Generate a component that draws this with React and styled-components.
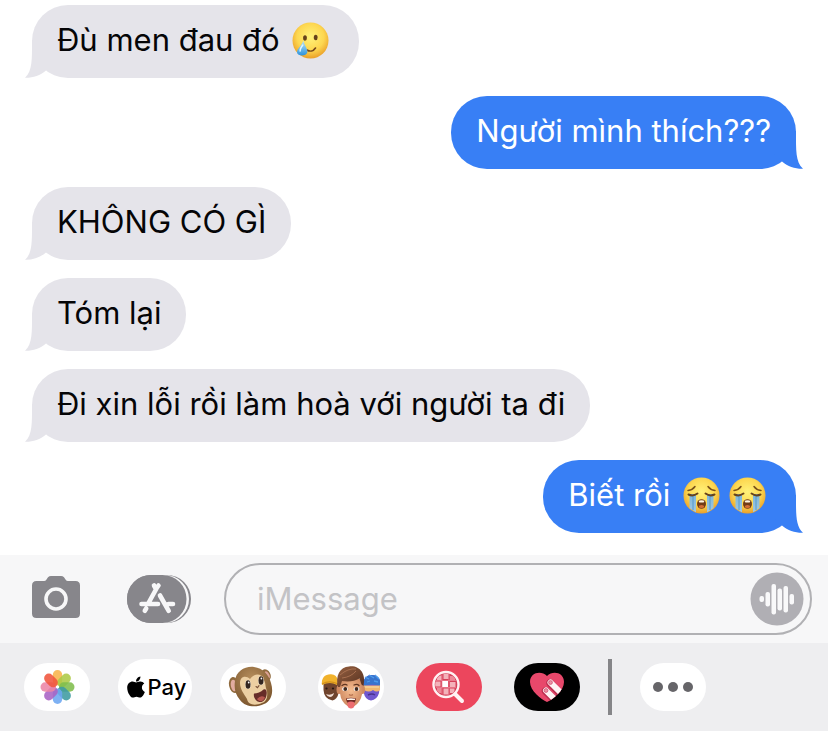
import React from "react";
import styled, { createGlobalStyle } from "styled-components";
import { FaApple } from "react-icons/fa";

const GlobalStyle = createGlobalStyle`
  * {
    box-sizing: border-box;
  }
  body {
    margin: 0;
    background: #ffffff;
    font-family: Inter, "Liberation Sans", sans-serif;
  }
  button {
    padding: 0;
    border: 0;
    background: none;
    font: inherit;
    cursor: pointer;
  }
  svg {
    display: block;
  }
`;

const Page = styled.div`
  display: flex;
  flex-direction: column;
  min-height: 100vh;
`;

const Thread = styled.main`
  flex: 1;
  display: flex;
  flex-direction: column;
  gap: 18px;
  padding: 5px 32px 22px;
`;

const Bubble = styled.p`
  position: relative;
  align-self: ${({ $sent }) => ($sent ? "flex-end" : "flex-start")};
  margin: 0;
  padding: 15px 25px 19px;
  border-radius: 36px;
  font-size: 31px;
  line-height: 39px;
  color: ${({ $sent }) => ($sent ? "#ffffff" : "#050507")};
  background: ${({ $sent }) => ($sent ? "#387ff5" : "#e5e4ea")};
`;

const Tail = styled.svg`
  position: absolute;
  bottom: 0;
  ${({ $sent }) => ($sent ? "right: -7px; transform: scaleX(-1);" : "left: -7px;")}
  fill: ${({ $sent }) => ($sent ? "#387ff5" : "#e5e4ea")};
`;

const EmojiSvg = styled.svg`
  display: inline-block;
  width: 37px;
  height: 37px;
  margin: 0 5px 0 4px;
  vertical-align: -8px;
`;

const Compose = styled.form`
  display: flex;
  align-items: center;
  padding: 8px 16px;
  padding-left: 32px;
  background: #f7f7f8;
`;

const IconButton = styled.button`
  margin-right: ${({ $space }) => $space}px;
`;

const Field = styled.div`
  flex: 1;
  min-width: 0;
  display: flex;
  align-items: center;
  height: 72px;
  padding: 0 6px 0 31px;
  border: 2px solid #b1b1b4;
  border-radius: 36px;
`;

const MessageInput = styled.input`
  flex: 1;
  min-width: 0;
  padding: 0;
  border: 0;
  outline: 0;
  background: none;
  font: inherit;
  font-size: 31px;
  line-height: 40px;
  &::placeholder {
    color: #c3c3c6;
    opacity: 1;
  }
`;

const AppStrip = styled.nav`
  display: flex;
  align-items: center;
  gap: 24px;
  height: 88px;
  padding: 0 20px;
  background: #eeeef0;
`;

const AppSlot = styled.div`
  display: flex;
  justify-content: center;
  flex: 0 0 74px;
`;

const AppButton = styled.button`
  display: flex;
  align-items: center;
  justify-content: center;
  width: ${({ $large }) => ($large ? 74 : 66)}px;
  height: ${({ $large }) => ($large ? 56 : 48)}px;
  border-radius: 28px;
  background: ${({ $bg }) => $bg || "#ffffff"};
`;

const PayLabel = styled.span`
  font-size: 22px;
  font-weight: 500;
  line-height: 28px;
  color: #000000;
`;

const Divider = styled.div`
  width: 4px;
  height: 56px;
  background: #858588;
`;

const FaceGradient = ({ id }) => (
  <radialGradient id={id} cx="0.5" cy="0.4" r="0.62">
    <stop offset="0" stopColor="#fff27a" />
    <stop offset="0.6" stopColor="#fdd750" />
    <stop offset="1" stopColor="#e99b25" />
  </radialGradient>
);

const TearSmile = () => (
  <EmojiSvg viewBox="0 0 37 37" role="img" aria-label="🥲">
    <defs>
      <FaceGradient id="smile-face" />
      <linearGradient id="smile-tear" x1="0" y1="0" x2="0" y2="1">
        <stop offset="0" stopColor="#b9e6fa" />
        <stop offset="1" stopColor="#2f94dd" />
      </linearGradient>
    </defs>
    <circle cx="18.5" cy="18.5" r="18" fill="url(#smile-face)" />
    <ellipse cx="13" cy="16" rx="1.9" ry="2.8" fill="#66421b" />
    <ellipse cx="23.7" cy="15.5" rx="1.9" ry="2.8" fill="#66421b" />
    <path d="M15 28c3 2 6.500 1 8.500-2" fill="none" stroke="#76471c" strokeWidth="1.600" strokeLinecap="round" />
    <path d="M11.300 18.500c-1.200 5-6.600 8.500-6.300 12 .3 3.700 9.300 4 10.300 0 .8-3.600-3-7-4-12z" fill="url(#smile-tear)" />
    <path d="M10.800 23c-1.500 2-3 4-2.600 6" fill="none" stroke="#def5ff" strokeWidth="1.500" strokeLinecap="round" />
  </EmojiSvg>
);

const Crying = ({ id }) => (
  <EmojiSvg viewBox="0 0 37 37" role="img" aria-label="😭">
    <defs>
      <FaceGradient id={id} />
      <linearGradient id={`${id}-tears`} x1="0" y1="0" x2="0" y2="1">
        <stop offset="0" stopColor="#79b4dc" />
        <stop offset="1" stopColor="#a2cae2" />
      </linearGradient>
    </defs>
    <circle cx="18.5" cy="18.5" r="18" fill={`url(#${id})`} />
    <path d="M6.500 17h6.500v18.200Q9.500 33.500 6.500 31zM24 17h6.500v14q-3 2.600-6.500 4.200z" fill={`url(#${id}-tears)`} />
    <path d="M10 19v14M27 19v14" stroke="#5798c8" strokeWidth="1" />
    <path d="M5 13.500q4.500-.5 7-4M32 13.500q-4.500-.5-7-4" fill="none" stroke="#795019" strokeWidth="1.500" strokeLinecap="round" />
    <path d="M5.500 17.500q4.500 2.200 9-1M31.500 17.500q-4.500 2.200-9-1" fill="none" stroke="#68431b" strokeWidth="2" strokeLinecap="round" />
    <ellipse cx="18.5" cy="27" rx="4.5" ry="4.8" fill="#713c16" />
    <ellipse cx="18.5" cy="24.400" rx="2.8" ry="1.200" fill="#fff5df" />
    <ellipse cx="18.5" cy="29.500" rx="2.7" ry="1.500" fill="#d46e36" />
  </EmojiSvg>
);

const CameraIcon = () => (
  <svg width="48" height="48" viewBox="0 0 48 48">
    <path
      d="M4.500 6h7.500q1.500 0 2.500-1.500L16 2.300Q17.200 1 19 1h10q1.800 0 3 1.300l1.500 2.200Q34.500 6 36 6h7.500Q48 6 48 10.500v28q0 4.500-4.500 4.500h-39Q0 43 0 38.500v-28Q0 6 4.500 6z"
      fill="#87868b"
    />
    <circle cx="24" cy="24" r="10" fill="none" stroke="#f7f7f8" strokeWidth="3.600" />
  </svg>
);

const AppStoreIcon = () => (
  <svg width="64" height="48" viewBox="0 0 64 48">
    <rect width="64" height="48" rx="24" fill="#87868b" />
    <rect x="10" width="52" height="48" rx="24" fill="#f7f7f8" />
    <rect width="59.500" height="48" rx="24" fill="#87868b" />
    <g fill="none" stroke="#f7f7f8" strokeWidth="4.600" strokeLinecap="round" strokeLinejoin="round">
      <path d="M27 10.500l2 3.500 2.500-3.500M29.500 13.500L21.500 28M19.200 33.500l-1.400 2.300M14.500 29H31M41.500 29h4.500M33 20.500l8.700 15.300" />
    </g>
  </svg>
);

const AudioIcon = () => (
  <svg width="54" height="54" viewBox="0 0 54 54">
    <circle cx="27" cy="27" r="26.500" fill="#b0afb4" />
    <g fill="#f9f9fa">
      <rect x="9.500" y="24" width="4.500" height="6" rx="2" />
      <rect x="15.500" y="20" width="4.500" height="14.500" rx="2" />
      <rect x="21.500" y="12" width="4.500" height="30.500" rx="2" />
      <rect x="27.500" y="16.500" width="4.500" height="22" rx="2" />
      <rect x="33.500" y="14" width="4.500" height="26.500" rx="2" />
      <rect x="39.500" y="22" width="4.500" height="10.500" rx="2" />
    </g>
  </svg>
);

const PETALS = ["#f8b44b", "#adc945", "#7fbd4c", "#3d9ba0", "#6ca6f1", "#a962c4", "#ec85a6", "#f0543c"];

const PhotosIcon = () => (
  <svg width="36" height="36" viewBox="-18.500 -18 36 36">
    {PETALS.map((color, i) => (
      <rect
        key={color}
        x="-4.700"
        y="-17"
        width="9.400"
        height="15.500"
        rx="4.700"
        fill={color}
        fillOpacity="0.88"
        transform={`rotate(${i * 45})`}
      />
    ))}
    <circle r="1.300" fill="#ffffff" />
  </svg>
);

const MonkeyIcon = () => (
  <svg width="66" height="48" viewBox="0 0 66 48">
    <defs>
      <radialGradient id="monkey-fur" cx="0.45" cy="0.3" r="0.7">
        <stop offset="0" stopColor="#b58e5c" />
        <stop offset="1" stopColor="#7d572f" />
      </radialGradient>
    </defs>
    <ellipse cx="14" cy="22" rx="5" ry="8" fill="#8f6a3d" transform="rotate(-10 14 22)" />
    <ellipse cx="13.800" cy="22.500" rx="3" ry="5.800" fill="#e2aca0" transform="rotate(-10 13.800 22.500)" />
    <ellipse cx="46" cy="12" rx="4.500" ry="6" fill="#8f6a3d" transform="rotate(-28 46 12)" />
    <ellipse cx="47" cy="12" rx="2.300" ry="4" fill="#dca294" transform="rotate(-28 47 12)" />
    <path d="M15 18C16 8 25 3 34 4c9 1 15 8 17 16 3 10 0 18-7 21-8 4-19 3-24-4-5-6-6-12-5-19z" fill="url(#monkey-fur)" />
    <path d="M20 20c0-7 6-8 10-4 4-6 12-6 14 1 2 4 1 6 3 11 1 7-1 11-5 12-7 3-14 2-15-4-3-5-7-10-7-16z" fill="#eccfa2" />
    <ellipse cx="28" cy="21.500" rx="2.900" ry="4.600" fill="#fbf2df" />
    <ellipse cx="41" cy="17.500" rx="2.900" ry="4.600" fill="#fbf2df" />
    <ellipse cx="28" cy="21.500" rx="2.500" ry="4.300" fill="#33251f" />
    <ellipse cx="41" cy="17.500" rx="2.500" ry="4.300" fill="#33251f" />
    <circle cx="28.700" cy="19.500" r="0.900" fill="#ffffff" />
    <circle cx="41.400" cy="15.500" r="0.900" fill="#ffffff" />
    <path d="M36 23.500l1.500 1.200 1.500-2" fill="none" stroke="#795138" strokeWidth="1.100" strokeLinecap="round" />
    <path d="M34 30.500c3 0 7-1.500 9.500-4 2-.8 3.500.5 3.200 4C46.500 36 43 39.500 39.500 39 36 38.500 33 34 34 30.500z" fill="#672c28" />
    <path d="M37 36q4-4.500 8-1.500c-1.500 4-5.500 5-8 1.500z" fill="#b7584f" />
  </svg>
);

const MemojiIcon = () => (
  <svg width="66" height="48" viewBox="0 0 66 48">
    <defs>
      <linearGradient id="memoji-hair" x1="0" y1="0" x2="1" y2="1">
        <stop offset="0" stopColor="#956041" />
        <stop offset="1" stopColor="#55301f" />
      </linearGradient>
      <radialGradient id="memoji-skin" cx="0.5" cy="0.4" r="0.65">
        <stop offset="0" stopColor="#f5bd91" />
        <stop offset="1" stopColor="#c77f57" />
      </radialGradient>
    </defs>
    <path d="M5.500 20h15v10q-1 6-6 7.500Q6 36 5.500 27z" fill="#70442d" />
    <path d="M4 22C3 15 7 11 13 11.200q6 .3 7 6.800l-1 4q-7-4-15 0z" fill="#f1b22c" />
    <path d="M4 21q7-4 15-.5" fill="none" stroke="#d29019" strokeWidth="1.300" />
    <circle cx="8.500" cy="25.500" r="1.100" fill="#281711" />
    <circle cx="15" cy="25.500" r="1.100" fill="#281711" />
    <path d="M8 31q4 2 8-1-1 4-4 4-3-.5-4-3z" fill="#f2ded4" />
    <path d="M45 21q1-9 9-9 7 0 8 8l-1 10q-2 7-8 7.500-6-1-7-7z" fill="#7057cf" />
    <path d="M46 17q2-5 8-5 6 0 8 5v6q-8-3-16 0z" fill="#3974cc" />
    <path d="M47 14l4 2M51 12l5 3M57 12l4 4M49 19l3-1M56 18l4 1" stroke="#4d9bec" strokeWidth="1.300" />
    <path d="M45 22.500h17v4.500q-3 3-7 0-4 3-9 0z" fill="#f1b66e" />
    <path d="M46 24h15" stroke="#f8d7a1" strokeWidth="1.200" />
    <path d="M50 32q4-2 7 0" stroke="#49318d" strokeWidth="1.400" fill="none" />
    <ellipse cx="21" cy="26.500" rx="2.500" ry="4.500" fill="#d08a60" />
    <ellipse cx="44.500" cy="26.500" rx="2.500" ry="4.500" fill="#d08a60" />
    <path d="M21.500 16h23q1 12-1.500 19-3 7.500-10 9.500-7-2-10-9.500-2-7-1.500-19z" fill="url(#memoji-skin)" />
    <path d="M20 24C17 13 22 4 31 3.500 41 2 48.500 10 45.500 23l-2-1.500-2-6q-7 4-17.500 2.500l-2 6z" fill="url(#memoji-hair)" />
    <path d="M22 12q8-7 16-6M24 15q9-1 14-7" fill="none" stroke="#a87050" strokeWidth="1" />
    <path d="M24 22.500q3-2 5-.5M36 22q3-1.500 5 .5" fill="none" stroke="#603521" strokeWidth="1.300" strokeLinecap="round" />
    <ellipse cx="27" cy="26" rx="2.800" ry="2.100" fill="#ffffff" />
    <ellipse cx="38.500" cy="26" rx="2.800" ry="2.100" fill="#ffffff" />
    <circle cx="27.300" cy="26" r="1.900" fill="#41291e" />
    <circle cx="38.500" cy="26" r="1.900" fill="#41291e" />
    <path d="M31 31.500q2 1.500 4 0" fill="none" stroke="#b36d4b" strokeWidth="1.200" />
    <path d="M28 35.500q5-1.500 10 0-.5 5.500-5 6-4.500-.5-5-6z" fill="#722c27" />
    <path d="M29 35.700q4-1 8 0v1.300h-8z" fill="#fff5eb" />
    <path d="M29.500 39.500q3.500-2 7 0v3q-.5 3-3.500 3-3 0-3.500-3z" fill="#ed6c70" />
  </svg>
);

const SearchIcon = () => (
  <svg width="34" height="34" viewBox="0 0 34 34">
    <defs>
      <clipPath id="lens">
        <circle cx="14" cy="14.500" r="10.800" />
      </clipPath>
    </defs>
    <path d="M22 23l8 8" stroke="#fff2f3" strokeWidth="4" strokeLinecap="round" />
    <circle cx="14" cy="14.500" r="12.500" fill="#d6405a" stroke="#fff2f3" strokeWidth="2.400" />
    <g clipPath="url(#lens)" fill="#f4b2ba">
      <rect x="11.500" y="3" width="5" height="6" />
      <rect x="5" y="5.500" width="4.500" height="4.500" />
      <rect x="18" y="6" width="5" height="4.500" fill="#ee8796" />
      <rect x="2.500" y="11.500" width="6" height="5" />
      <rect x="10" y="11" width="6" height="6" fill="#ffffff" />
      <rect x="18" y="12" width="5.500" height="5" />
      <rect x="5" y="18" width="4.500" height="5" fill="#ee8796" />
      <rect x="11.500" y="18.500" width="5" height="6" />
      <rect x="18" y="18.500" width="4.500" height="4.500" />
      <path d="M4 10.500h20M4 17.500h20M10 3v23M17 3v23" stroke="#ee8796" strokeWidth="0.700" />
    </g>
  </svg>
);

const TouchIcon = () => (
  <svg width="34" height="30" viewBox="0 0 34 30">
    <defs>
      <clipPath id="heart">
        <path d="M17 30C11 27 0 19 0 10 0 0.500 11-2 17 4c6-6 17-3.500 17 6 0 9-11 17-17 20z" />
      </clipPath>
    </defs>
    <g clipPath="url(#heart)">
      <rect width="34" height="30" fill="#e8486b" />
      <g strokeLinecap="round">
        <path d="M20 11l15 15M15.500 19l15 15" stroke="#bd2f50" strokeWidth="7.500" />
        <path d="M20.500 10.500l15 15M16 18.500l15 15" stroke="#fff3f4" strokeWidth="6" />
      </g>
      <circle cx="20.500" cy="10.500" r="1.900" fill="#ec92a4" stroke="#ce5673" strokeWidth="0.800" />
      <circle cx="16" cy="18.500" r="1.900" fill="#ec92a4" stroke="#ce5673" strokeWidth="0.800" />
    </g>
  </svg>
);

const MoreIcon = () => (
  <svg width="40" height="10" viewBox="0 0 40 10" fill="#666569">
    <circle cx="5" cy="5" r="5" />
    <circle cx="20" cy="5" r="5" />
    <circle cx="35" cy="5" r="5" />
  </svg>
);

const Message = ({ sent, children }) => (
  <Bubble $sent={sent}>
    <Tail $sent={sent} width="32" height="38" viewBox="0 0 32 38" aria-hidden="true">
      <path d="M7 0C7 19 7.500 31 0 37.800 8 38 15 35.500 21 30.500L32 20V0z" />
    </Tail>
    {children}
  </Bubble>
);

const App = () => (
  <Page>
    <GlobalStyle />
    <Thread>
      <Message>
        Đù men đau đó <TearSmile />
      </Message>
      <Message sent>Người mình thích???</Message>
      <Message>KHÔNG CÓ GÌ</Message>
      <Message>Tóm lại</Message>
      <Message>Đi xin lỗi rồi làm hoà với người ta đi</Message>
      <Message sent>
        Biết rồi <Crying id="cry-one" />
        <Crying id="cry-two" />
      </Message>
    </Thread>
    <Compose onSubmit={(e) => e.preventDefault()}>
      <IconButton type="button" aria-label="Camera" $space={47}>
        <CameraIcon />
      </IconButton>
      <IconButton type="button" aria-label="Apps" $space={33}>
        <AppStoreIcon />
      </IconButton>
      <Field>
        <MessageInput type="text" aria-label="iMessage" placeholder="iMessage" />
        <IconButton type="button" aria-label="Record audio" $space={0}>
          <AudioIcon />
        </IconButton>
      </Field>
    </Compose>
    <AppStrip aria-label="Message apps">
      <AppSlot>
        <AppButton aria-label="Photos">
          <PhotosIcon />
        </AppButton>
      </AppSlot>
      <AppSlot>
        <AppButton $large aria-label="Apple Pay">
          <FaApple size={24} color="#000000" />
          <PayLabel>Pay</PayLabel>
        </AppButton>
      </AppSlot>
      <AppSlot>
        <AppButton aria-label="Animoji">
          <MonkeyIcon />
        </AppButton>
      </AppSlot>
      <AppSlot>
        <AppButton aria-label="Memoji">
          <MemojiIcon />
        </AppButton>
      </AppSlot>
      <AppSlot>
        <AppButton aria-label="Images" $bg="#ec465d">
          <SearchIcon />
        </AppButton>
      </AppSlot>
      <AppSlot>
        <AppButton aria-label="Digital Touch" $bg="#000000">
          <TouchIcon />
        </AppButton>
      </AppSlot>
      <Divider />
      <AppSlot>
        <AppButton aria-label="More">
          <MoreIcon />
        </AppButton>
      </AppSlot>
    </AppStrip>
  </Page>
);

export default App;
